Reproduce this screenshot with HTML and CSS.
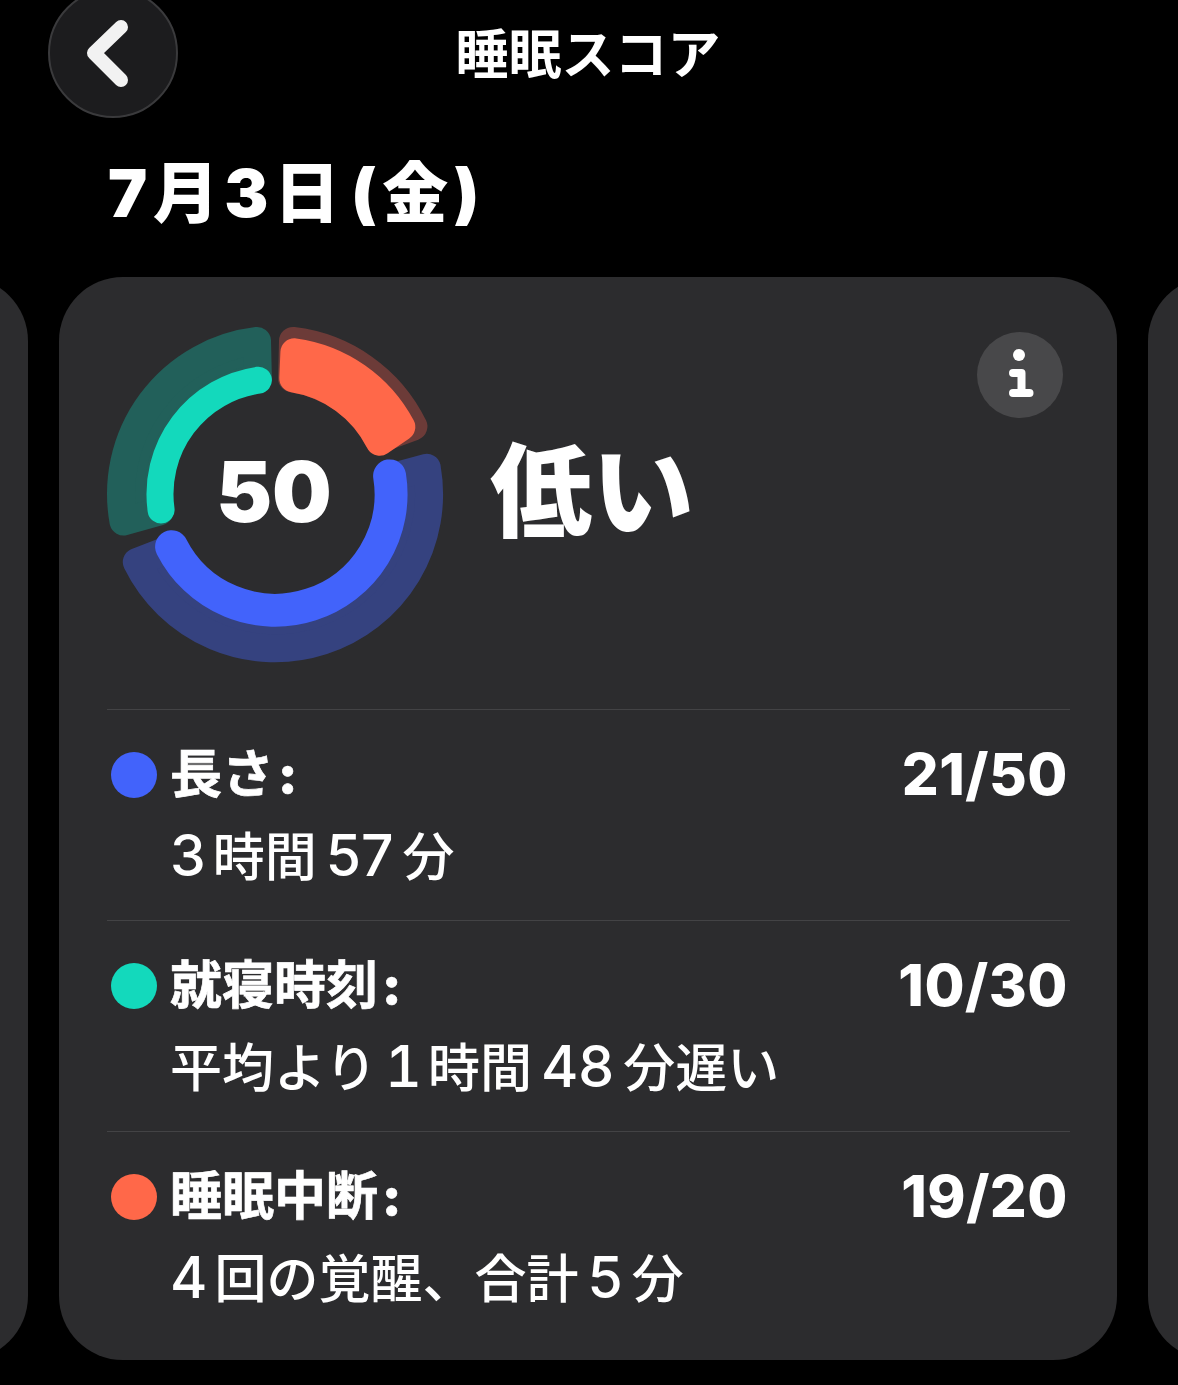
FILE: index.html
```html
<!DOCTYPE html>
<html lang="ja">
<head>
    <meta charset="UTF-8">
    <meta name="viewport" content="width=device-width, initial-scale=1.0">
    <title>睡眠スコア</title>
    <link rel="stylesheet" href="styles.css">
</head>
<body>
    <header class="topbar">
        <button class="back-btn" aria-label="戻る">
            <svg class="back-icon" viewBox="0 0 50 74" aria-hidden="true">
                <path d="M36 11 L9 37 L36 64"></path>
            </svg>
        </button>
        <h1 class="topbar-title">睡眠スコア</h1>
    </header>

    <h2 class="date">7月3日 (金)</h2>

    <div class="carousel">
        <div class="card card-side"></div>

        <section class="card">
            <div class="summary">
                <div class="ring">
                    <svg viewBox="0 0 340 340" width="340" height="340" aria-hidden="true">
                        <!-- tracks -->
                        <path class="track track-orange" d="M188 17 A154 154 0 0 1 308.4 102.5 L273.5 115.4 A117 117 0 0 0 187.1 54.3 Z"></path>
                        <path class="track track-blue" d="M321.8 143.8 A154 154 0 0 1 31.8 238 L66.6 224.7 A117 117 0 0 0 285.8 153.5 Z"></path>
                        <path class="track track-teal" d="M18.5 197.5 A154 154 0 0 1 152 17 L152.9 54.3 A117 117 0 0 0 54.3 187.5 Z"></path>
                        <!-- values -->
                        <path class="value-orange" d="M189.4 28.3 A143 143 0 0 1 296.3 102.9 L274.7 117.8 A117 117 0 0 0 188.3 54.4 Z"></path>
                        <path class="value value-blue" d="M284.6 151.9 A116 116 0 0 1 66.6 222.7"></path>
                        <path class="value value-teal" d="M56.1 186 A115 115 0 0 1 153.4 56.2"></path>
                    </svg>
                    <span class="ring-score">50</span>
                </div>
                <div class="rating">低い</div>
                <button class="info-btn" aria-label="情報">
                    <svg viewBox="0 0 86 86" width="86" height="86" aria-hidden="true">
                        <circle cx="42" cy="23" r="6" fill="#fff"></circle>
                        <path class="info-stem" d="M36 41 H44.5 V61 M36 61 H52.5"></path>
                    </svg>
                </button>
            </div>

            <div class="row">
                <span class="dot dot-blue"></span>
                <div class="row-text">
                    <div class="row-label">長さ<span class="colon">:</span></div>
                    <div class="row-detail"><span class="num num-lead">3</span>時間<span class="num">57</span>分</div>
                </div>
                <div class="row-score">21/50</div>
            </div>

            <div class="row">
                <span class="dot dot-teal"></span>
                <div class="row-text">
                    <div class="row-label">就寝時刻<span class="colon">:</span></div>
                    <div class="row-detail">平均より<span class="num num-one">1</span>時間<span class="num">48</span>分遅い</div>
                </div>
                <div class="row-score">10/30</div>
            </div>

            <div class="row">
                <span class="dot dot-orange"></span>
                <div class="row-text">
                    <div class="row-label">睡眠中断<span class="colon">:</span></div>
                    <div class="row-detail"><span class="num num-lead">4</span>回の覚醒、合計<span class="num">5</span>分</div>
                </div>
                <div class="row-score">19/20</div>
            </div>
        </section>

        <div class="card card-side"></div>
    </div>
</body>
</html>
```

FILE: styles.css
```css
/* Base */
html, body {
    height: 100%;
}

body {
    margin: 0;
    overflow: hidden;
    background-color: #000;
    color: #fff;
    font-family: Inter, "Noto Sans CJK JP", sans-serif;
}

button {
    padding: 0;
    border: none;
    cursor: pointer;
}

/* Header */
.topbar {
    display: flex;
    align-items: center;
    height: 130px;
    margin-top: -12px;
    padding-left: 48px;
}

.back-btn {
    flex: none;
    display: flex;
    align-items: center;
    justify-content: center;
    box-sizing: border-box;
    width: 130px;
    height: 130px;
    border: 2px solid #3a3a3c;
    border-radius: 50%;
    background-color: #1c1c1e;
}

.back-icon {
    width: 50px;
    height: 74px;
    margin-right: 6px;
}

.back-icon path {
    fill: none;
    stroke: #f2f2f2;
    stroke-width: 14;
    stroke-linecap: round;
    stroke-linejoin: round;
}

.topbar-title {
    margin: 4px 0 0 188px;
    width: 444px;
    font-size: 53px;
    line-height: 60px;
    font-weight: 700;
    text-align: center;
}

.date {
    margin: 33px 0 0 108px;
    font-size: 66px;
    line-height: 84px;
    font-weight: 900;
    letter-spacing: 5.5px;
    word-spacing: -13px;
}

/* Cards */
.carousel {
    display: flex;
    gap: 31px;
    margin: 42px 0 0 -1030px;
}

.card {
    flex: none;
    box-sizing: border-box;
    width: 1058px;
    height: 1083px;
    padding: 47px 47px 0 48px;
    border-radius: 64px;
    background-color: #2c2c2e;
}

.summary {
    display: flex;
    align-items: flex-start;
    height: 385px;
}

/* Ring */
.ring {
    position: relative;
    flex: none;
    width: 340px;
    height: 340px;
    margin-left: -2px;
}

.ring svg {
    display: block;
}

.track {
    stroke-width: 28;
    stroke-linejoin: round;
}

.track-orange {
    fill: #6c3b38;
    stroke: #6c3b38;
}

.track-blue {
    fill: #35427f;
    stroke: #35427f;
}

.track-teal {
    fill: #22605a;
    stroke: #22605a;
}

.value-orange {
    fill: #ff6849;
    stroke: #ff6849;
    stroke-width: 28;
    stroke-linejoin: round;
}

.value {
    fill: none;
    stroke-linecap: round;
}

.value-blue {
    stroke: #4263fb;
    stroke-width: 33;
}

.value-teal {
    stroke: #13d9bc;
    stroke-width: 27;
}

.ring-score {
    position: absolute;
    inset: 0 2px 6px 0;
    display: flex;
    align-items: center;
    justify-content: center;
    font-size: 84px;
    font-weight: 900;
}

.rating {
    margin: 103px 0 0 45px;
    font-size: 102px;
    line-height: 130px;
    font-weight: 900;
}

.info-btn {
    flex: none;
    width: 86px;
    height: 86px;
    margin: 8px 7px 0 auto;
    border-radius: 50%;
    background-color: #48484a;
}

.info-btn svg {
    display: block;
}

.info-stem {
    fill: none;
    stroke: #fff;
    stroke-width: 8;
    stroke-linecap: round;
    stroke-linejoin: round;
}

/* Rows */
.row {
    display: flex;
    align-items: flex-start;
    box-sizing: border-box;
    height: 211px;
    padding: 42px 2px 0 4px;
    border-top: 1px solid #434345;
}

.dot {
    flex: none;
    width: 46px;
    height: 46px;
    margin: 0 13px 0 0;
    border-radius: 50%;
}

.dot-blue {
    background-color: #4263fb;
}

.dot-teal {
    background-color: #13d9bc;
}

.dot-orange {
    background-color: #ff6849;
}

.row-text {
    flex: 1;
    margin-top: -9px;
}

.row-label {
    font-size: 52px;
    line-height: 64px;
    font-weight: 700;
    -webkit-text-stroke: 0.7px #fff;
}

.colon {
    margin-left: 4px;
    font-weight: 900;
}

.row-detail {
    margin-top: 17px;
    font-size: 52px;
    line-height: 64px;
    font-weight: 500;
}

.num {
    margin: 0 9px;
    font-size: 57px;
}

.num-lead {
    margin: 0 7px 0 0;
}

.num-one {
    margin: 0 6px 0 8px;
    font-variant-numeric: tabular-nums;
}

.row-score {
    margin-top: -10px;
    font-size: 58px;
    line-height: 64px;
    font-weight: 800;
    letter-spacing: 0.5px;
}
```
